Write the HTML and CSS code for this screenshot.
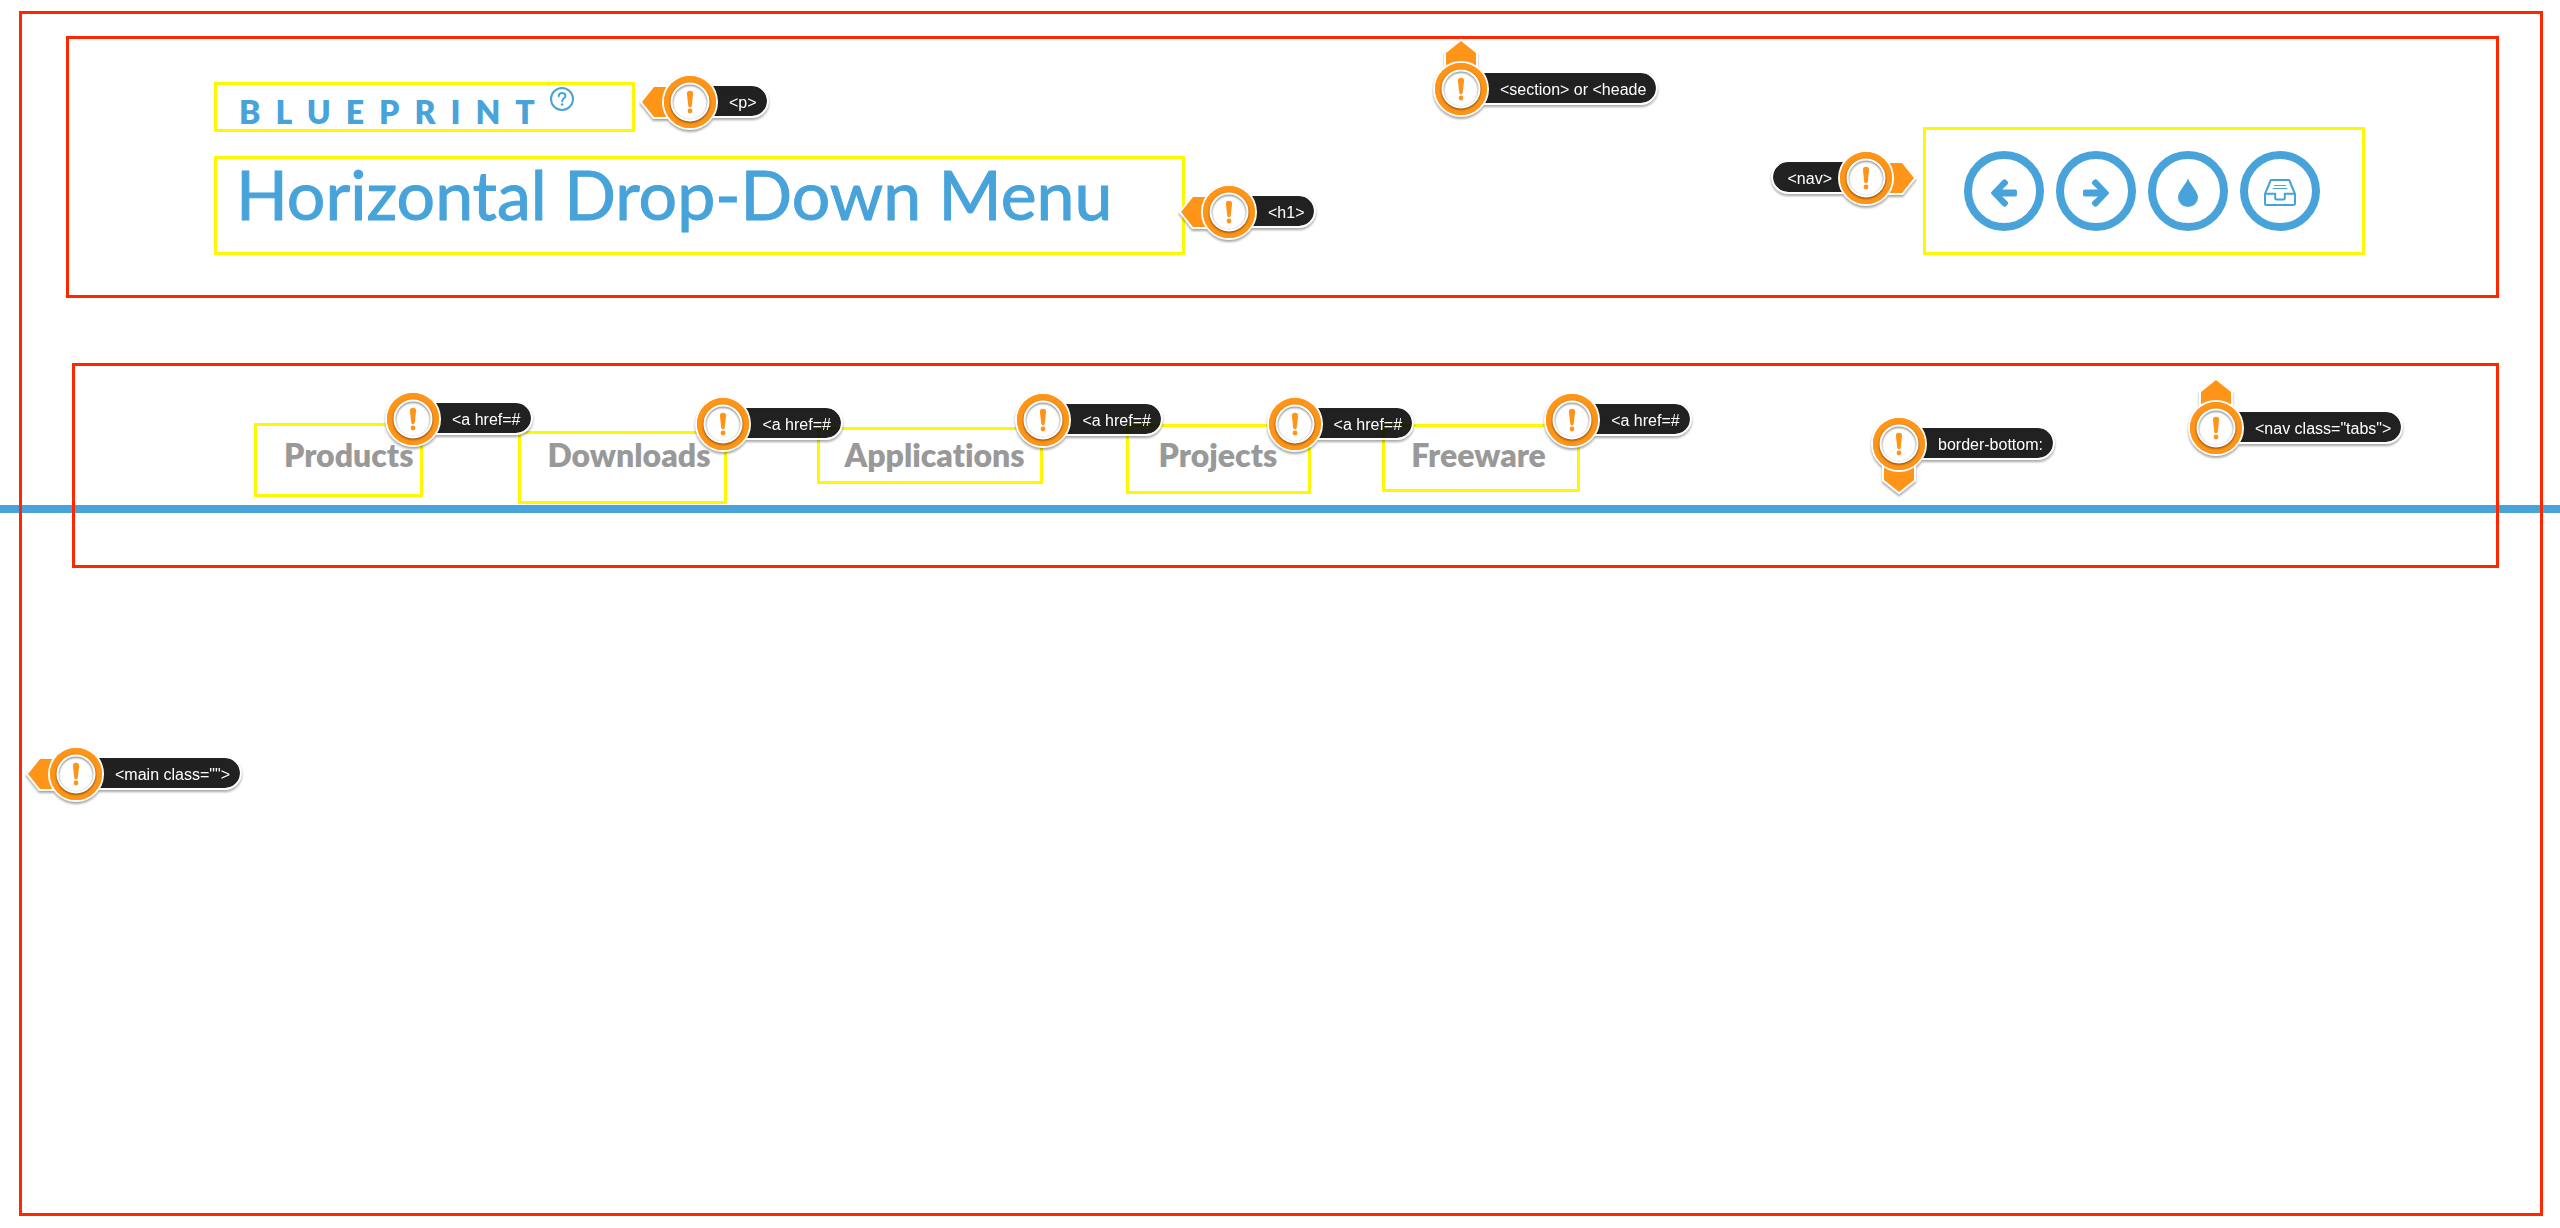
FILE: index.html
```html
<!DOCTYPE html>
<html lang="en">
<head>
<meta charset="utf-8">
<meta name="viewport" content="width=device-width, initial-scale=1">
<title>Horizontal Drop-Down Menu</title>
<link rel="stylesheet" href="styles.css">
</head>
<body>
<svg class="sprite" aria-hidden="true">
  <defs>
    <g id="dial">
      <circle r="19" class="dial-face"/>
      <circle r="22.5" class="dial-ring"/>
      <circle r="18.5" class="dial-rim"/>
      <path class="bang" d="M-3.1-8.2a3.1 3.1 0 0 1 6.2 0L1.8 3.6a1.8 1.8 0 0 1-3.6 0Z"/>
      <circle class="bang" cy="9" r="2.4"/>
    </g>
    <g id="arrow-shape"><path d="M-20-15H-36L-48 0L-36 15H-20Z"/></g>
  </defs>
</svg>

<main class="page">
  <header class="masthead">
    <div class="titles">
      <p class="brand">Blueprint
        <svg class="help" viewBox="0 0 24 24" aria-hidden="true"><circle cx="12" cy="12" r="11"/><path d="M8.7 9.2C8.9 7 10.2 6 12 6s3.4 1.100 3.400 3c0 2.500-3.200 2.600-3.200 5.200"/><circle class="help-dot" cx="12.100" cy="17.500" r="1.300"/></svg>
      </p>
      <h1 class="title">Horizontal Drop-Down Menu</h1>
    </div>
    <nav class="tools" aria-label="Demos">
      <a class="tool" href="#" aria-label="Previous"><svg width="26" height="28" viewBox="0 0 26 28"><path d="M.6 12.800 11.800.9c1-1 2.200-1 3.200-.1l1.400 1.400c1 1 .9 2.200 0 3.200L11.200 10.600H24c1.300 0 2 .7 2 2v2.800c0 1.300-.7 2-2 2H11.200l5.200 5.200c.9 1 1 2.200 0 3.200L15 27.200c-1 .9-2.200.9-3.200-.1L.6 15.200c-.8-.8-.8-1.600 0-2.400Z"/></svg></a>
      <a class="tool" href="#" aria-label="Next"><svg width="26" height="28" viewBox="0 0 26 28"><path d="M25.400 12.800 14.200.9c-1-1-2.200-1-3.200-.1L9.600 2.200c-1 1-.9 2.200 0 3.200l5.200 5.200H2c-1.300 0-2 .7-2 2v2.800c0 1.300.7 2 2 2h12.800l-5.200 5.200c-.9 1-1 2.200 0 3.200l1.400 1.400c1 .9 2.200.9 3.200-.1l11.200-11.900c.8-.8.8-1.600 0-2.400Z"/></svg></a>
      <a class="tool" href="#" aria-label="Color"><svg width="20" height="29" viewBox="0 0 20 29"><path d="M10 0C9 5.500 0 13 0 19.500a10 9.500 0 0 0 20 0C20 13 11 5.500 10 0Z"/></svg></a>
      <a class="tool" href="#" aria-label="Archive"><svg width="32" height="27" viewBox="0 0 32 27"><g class="line"><path d="M1 15 6.800 1h18.400L31 15v9.500a1.500 1.500 0 0 1-1.500 1.500h-27A1.500 1.500 0 0 1 1 24.500ZM1 14.800h10.200v4.200q0 1.500 1.500 1.500h6.600q1.500 0 1.500-1.500v-4.200H31"/></g><g class="line thin"><path d="M10 6.500h12M8.700 9.500h14.600"/></g></svg></a>
    </nav>

    <div class="pin pin-brand"><svg class="marker" viewBox="-26 -26 52 52" aria-hidden="true"><g class="arrow"><use href="#arrow-shape"/><circle r="26"/></g><use href="#dial"/></svg><span class="label">&lt;p&gt;</span></div>
    <div class="pin pin-title"><svg class="marker" viewBox="-26 -26 52 52" aria-hidden="true"><g class="arrow"><use href="#arrow-shape"/><circle r="26"/></g><use href="#dial"/></svg><span class="label">&lt;h1&gt;</span></div>
    <div class="pin pin-section"><svg class="marker" viewBox="-26 -26 52 52" aria-hidden="true"><g class="arrow"><use href="#arrow-shape" transform="rotate(90)"/><circle r="26"/></g><use href="#dial"/></svg><span class="label">&lt;section&gt; or &lt;heade</span></div>
    <div class="pin pin-tools reverse"><svg class="marker" viewBox="-26 -26 52 52" aria-hidden="true"><g class="arrow"><use href="#arrow-shape" transform="rotate(180)"/><circle r="26"/></g><use href="#dial"/></svg><span class="label">&lt;nav&gt;</span></div>
  </header>

  <nav class="tabs" aria-label="Main">
    <ul class="tab-list">
      <li class="tab products"><a href="#">Products</a><span class="outline"></span>
        <div class="pin"><svg class="marker" viewBox="-26 -26 52 52" aria-hidden="true"><g class="arrow"><circle r="26"/></g><use href="#dial"/></svg><span class="label">&lt;a href=#</span></div></li>
      <li class="tab downloads"><a href="#">Downloads</a><span class="outline"></span>
        <div class="pin"><svg class="marker" viewBox="-26 -26 52 52" aria-hidden="true"><g class="arrow"><circle r="26"/></g><use href="#dial"/></svg><span class="label">&lt;a href=#</span></div></li>
      <li class="tab applications"><a href="#">Applications</a><span class="outline"></span>
        <div class="pin"><svg class="marker" viewBox="-26 -26 52 52" aria-hidden="true"><g class="arrow"><circle r="26"/></g><use href="#dial"/></svg><span class="label">&lt;a href=#</span></div></li>
      <li class="tab projects"><a href="#">Projects</a><span class="outline"></span>
        <div class="pin"><svg class="marker" viewBox="-26 -26 52 52" aria-hidden="true"><g class="arrow"><circle r="26"/></g><use href="#dial"/></svg><span class="label">&lt;a href=#</span></div></li>
      <li class="tab freeware"><a href="#">Freeware</a><span class="outline"></span>
        <div class="pin"><svg class="marker" viewBox="-26 -26 52 52" aria-hidden="true"><g class="arrow"><circle r="26"/></g><use href="#dial"/></svg><span class="label">&lt;a href=#</span></div></li>
    </ul>
    <div class="pin pin-border"><svg class="marker" viewBox="-26 -26 52 52" aria-hidden="true"><g class="arrow"><use href="#arrow-shape" transform="rotate(-90)"/><circle r="26"/></g><use href="#dial"/></svg><span class="label">border-bottom:</span></div>
    <div class="pin pin-tabs"><svg class="marker" viewBox="-26 -26 52 52" aria-hidden="true"><g class="arrow"><use href="#arrow-shape" transform="rotate(90)"/><circle r="26"/></g><use href="#dial"/></svg><span class="label">&lt;nav class="tabs"&gt;</span></div>
  </nav>

  <div class="pin pin-main"><svg class="marker" viewBox="-26 -26 52 52" aria-hidden="true"><g class="arrow"><use href="#arrow-shape"/><circle r="26"/></g><use href="#dial"/></svg><span class="label">&lt;main class=""&gt;</span></div>
</main>
</body>
</html>
```
FILE: styles.css
```css
:root {
  --blue: #47a3da;
  --red: #ff2600;
  --yellow: #fff700;
  --orange: #ff9518;
}

* {
  box-sizing: border-box;
}

body {
  margin: 0;
  padding: 11px 17px 12px 19px;
  background: #fff;
  color: var(--blue);
  font-family: Lato, "Liberation Sans", sans-serif;
}

.sprite {
  position: absolute;
  width: 0;
  height: 0;
}

.page {
  position: relative;
  min-height: calc(100vh - 23px);
  padding: 22px 41px 40px 44px;
  border: 3px solid var(--red);
}

/* Header */
.masthead {
  position: relative;
  display: flex;
  justify-content: space-between;
  align-items: flex-end;
  padding: 43px 131px 40px 145px;
  border: 3px solid var(--red);
}

.titles {
  display: flex;
  flex-direction: column;
  align-items: flex-start;
  gap: 24px;
}

.brand {
  display: flex;
  width: 421px;
  height: 50px;
  margin: 0;
  padding: 0 22px;
  border: 3px solid var(--yellow);
  font-size: 32px;
  font-weight: 800;
  line-height: 54px;
  letter-spacing: 15px;
  text-transform: uppercase;
}

.help {
  width: 24px;
  height: 24px;
  margin-top: 2px;
  overflow: visible;
  fill: none;
  stroke: currentColor;
  stroke-width: 2;
  stroke-linecap: round;
}

.help-dot {
  fill: currentColor;
  stroke: none;
}

.title {
  width: 971px;
  height: 99px;
  margin: 0;
  padding: 0 19px;
  border: 3px solid var(--yellow);
  font-size: 68px;
  font-weight: 400;
  line-height: 70px;
  -webkit-text-stroke: 1px var(--blue);
}

.tools {
  display: flex;
  gap: 12px;
  padding: 21px 42px 21px 38px;
  border: 3px solid var(--yellow);
}

.tool {
  display: grid;
  place-items: center;
  width: 80px;
  height: 80px;
  padding-top: 3px;
  border: 8px solid var(--blue);
  border-radius: 50%;
}

.tool svg {
  fill: var(--blue);
}

.tool .line {
  fill: none;
  stroke: var(--blue);
  stroke-width: 2;
  stroke-linejoin: round;
}

.tool .thin {
  stroke-width: 1;
}

/* Tabs */
.tabs {
  position: relative;
  margin: 65px 0 0 6px;
  padding: 65px 0 86px 209px;
  border: 3px solid var(--red);
}

.tabs::after {
  content: "";
  position: absolute;
  z-index: -1;
  top: 139px;
  right: -64px;
  left: -75px;
  height: 8px;
  background: var(--blue);
}

.tab-list {
  display: flex;
  gap: 134px;
  margin: 0;
  padding: 0;
  list-style: none;
}

.tab {
  position: relative;
}

.tab a {
  display: block;
  color: #999;
  font-size: 32px;
  font-variant-ligatures: none;
  font-weight: 800;
  line-height: 48px;
  text-decoration: none;
}

.outline {
  position: absolute;
  border: 3px solid var(--yellow);
  pointer-events: none;
}

.products .outline { top: -8px; left: -30px; width: 169px; height: 74px; }
.downloads .outline { top: 0; left: -29px; width: 209px; height: 73px; }
.applications .outline { top: -4px; left: -27px; width: 226px; height: 57px; }
.projects .outline { top: -7px; left: -33px; width: 185px; height: 70px; }
.freeware .outline { top: -7px; left: -29px; width: 198px; height: 68px; }

/* Annotation pins */
.pin {
  position: absolute;
  z-index: 1;
  display: flex;
  align-items: center;
  filter: drop-shadow(0 2px 1px rgb(0 0 0 / 35%));
}

.marker {
  position: relative;
  z-index: 1;
  flex: none;
  width: 52px;
  height: 52px;
  overflow: visible;
}

.arrow {
  fill: var(--orange);
  stroke: #fff;
  stroke-width: 4;
  paint-order: stroke;
}

.dial-face {
  fill: #fff;
}

.dial-ring {
  fill: none;
  stroke: var(--orange);
  stroke-width: 7;
}

.dial-rim {
  fill: none;
  stroke: #fff;
  stroke-width: 2;
  filter: drop-shadow(0 1px 1px rgb(0 0 0 / 60%));
}

.bang {
  fill: var(--orange);
}

.label {
  height: 34px;
  margin: 0 0 2px -26px;
  padding: 2px 10px 0 39px;
  border: 2px solid #fff;
  border-left: 0;
  border-radius: 0 17px 17px 0;
  background: rgb(0 0 0 / 82%);
  background-clip: padding-box;
  color: #fff;
  font-family: "Liberation Sans", Arial, sans-serif;
  font-size: 16px;
  line-height: 30px;
  white-space: nowrap;
}

.reverse {
  flex-direction: row-reverse;
}

.reverse .label {
  margin: 0 -26px 2px 0;
  padding: 2px 34px 0 15px;
  border-right: 0;
  border-left: 2px solid #fff;
  border-radius: 17px 0 0 17px;
}

.pin-brand { top: 37px; left: 595px; }
.pin-title { top: 147px; left: 1134px; }
.pin-section { top: 24px; left: 1366px; }
.pin-tools { top: 113px; right: 604px; }
.products .pin { top: -38px; left: 103px; }
.downloads .pin { top: -33px; left: 150px; }
.applications .pin { top: -37px; left: 173px; }
.projects .pin { top: -33px; left: 110px; }
.freeware .pin { top: -37px; left: 135px; }
.pin-border { top: 52px; left: 1798px; }
.pin-tabs { top: 36px; left: 2115px; }
.pin-main { top: 734px; left: 28px; }
```
